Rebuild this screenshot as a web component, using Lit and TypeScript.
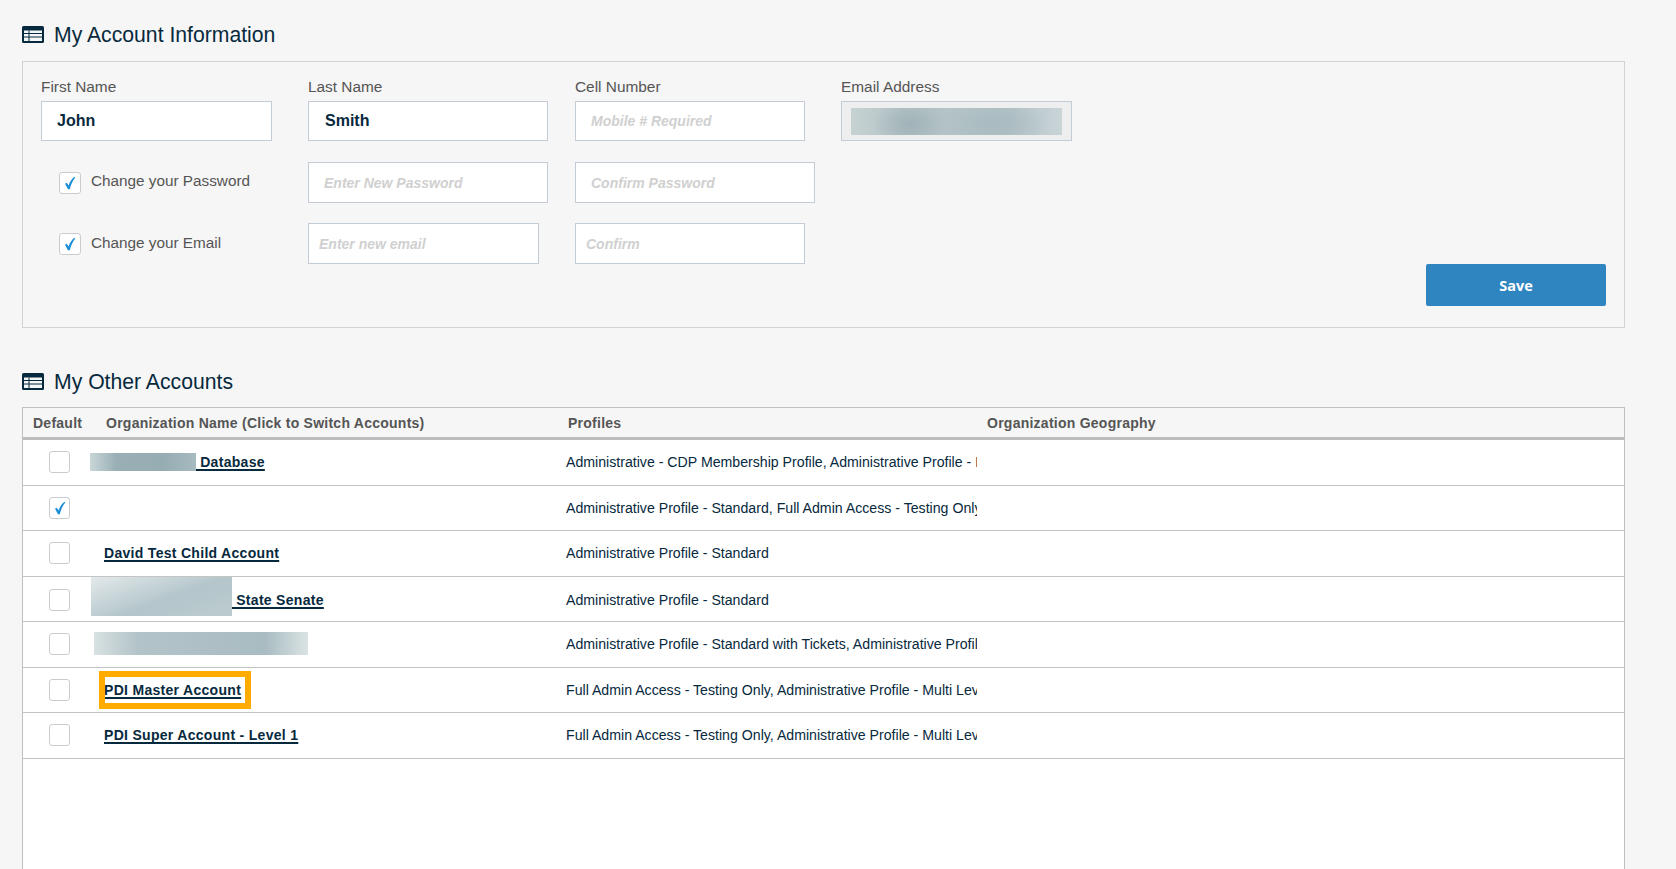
import { LitElement, html, css } from "lit";
import { customElement } from "lit/decorators.js";

const checkIcon = html`<svg width="12" height="14" viewBox="0 0 12 14"><path d="M1 7.8 L2.8 6.8 L4.6 9.4 C5.6 6.4 7.6 3 10.4 .8 L11.2 1.4 C8.8 4.4 6.9 8.4 5.8 13.2 L4 13.2 Z" fill="#1b8ed6"></path></svg>`;

const listIcon = html`<svg class="list-icon" width="22" height="17" viewBox="0 0 22 17">
  <rect width="22" height="17" rx="1.5" fill="#07293d"></rect>
  <rect x="2" y="4.5" width="18" height="10.5" fill="#f4f7f9"></rect>
  <path d="M2 7.5H20M2 11H20M7 4.5V15" stroke="#07293d" stroke-width="1" fill="none"></path>
</svg>`;

interface Account {
  name?: string;
  blur?: string;
  checked?: boolean;
  highlight?: boolean;
  profiles: string;
}

const ACCOUNTS: Account[] = [
  { blur: "blur-a", name: " Database", profiles: "Administrative - CDP Membership Profile, Administrative Profile - Multi Level" },
  { checked: true, profiles: "Administrative Profile - Standard, Full Admin Access - Testing Only, Administrative" },
  { name: "David Test Child Account", profiles: "Administrative Profile - Standard" },
  { blur: "blur-b", name: " State Senate", profiles: "Administrative Profile - Standard" },
  { blur: "blur-c", profiles: "Administrative Profile - Standard with Tickets, Administrative Profile - Multi Level" },
  { name: "PDI Master Account", highlight: true, profiles: "Full Admin Access - Testing Only, Administrative Profile - Multi Level" },
  { name: "PDI Super Account - Level 1", profiles: "Full Admin Access - Testing Only, Administrative Profile - Multi Level" },
];

@customElement("app-root")
export class AppRoot extends LitElement {
  static styles = css`
    :host {
      display: block;
      height: 869px;
      overflow: hidden;
      background: #f6f6f6;
      color: #07293d;
      font-family: "Liberation Sans", Arial, sans-serif;
      padding: 0 51px 0 22px;
      box-sizing: border-box;
    }

    .heading {
      display: flex;
      align-items: center;
      gap: 10px;
      height: 35px;
      margin: 0;
      font-size: 21.2px;
      font-weight: 400;
      color: #07293d;
    }

    .heading-first {
      padding-top: 17px;
      margin-bottom: 9px;
    }

    .heading-second {
      margin-top: 36px;
      margin-bottom: 8px;
    }

    .panel {
      border: 1px solid #d2d2d2;
      padding: 16px 18px 21px 18px;
      display: grid;
      grid-template-columns: 267px 267px 266px 1fr;
    }

    .field-label {
      display: block;
      font-size: 15.4px;
      line-height: 18px;
      height: 18px;
      margin-bottom: 5px;
      color: #555;
    }

    .field input,
    .email-box {
      display: block;
      box-sizing: border-box;
      height: 40px;
      width: 231px;
      border: 1px solid #c2cbd6;
      background: #fff;
      padding: 0 15px;
      font-family: inherit;
      font-size: 16px;
      font-weight: 700;
      color: #07293d;
      outline: none;
    }

    .field input::placeholder {
      color: #d0d0d0;
      font-style: italic;
      font-size: 14px;
      font-weight: 700;
      opacity: 1;
    }

    .field input.short {
      width: 230px;
    }

    .field input.last {
      width: 240px;
      padding-left: 16px;
    }

    .field input.wide {
      width: 240px;
      height: 41px;
    }

    .field input.tall {
      height: 41px;
    }

    .field input.tight {
      padding-left: 10px;
    }

    .email-box {
      background: #eeeeee;
      padding: 6px 9px;
    }

    .email-blur {
      height: 27px;
      background: radial-gradient(ellipse 18% 90% at 28% 60%, #a1b3b8 0%, #a1b3b800 100%),
        radial-gradient(ellipse 25% 90% at 68% 60%, #a9bbc0 0%, #a9bbc000 100%),
        linear-gradient(90deg, #c6d2d2, #b4c3c7 25%, #b3c3c8 75%, #c9d4d7);
    }

    .row-2 {
      margin-top: 21px;
      grid-column: 1 / -1;
      display: grid;
      grid-template-columns: subgrid;
    }

    .row-3 {
      margin-top: 20px;
      grid-column: 1 / -1;
      display: grid;
      grid-template-columns: subgrid;
    }

    .check-row {
      display: flex;
      align-items: center;
      gap: 10px;
      padding: 10px 0 0 18px;
      height: 22px;
      font-size: 15.3px;
      color: #555;
    }

    .check-row span.text {
      position: relative;
      top: -2px;
    }

    .row-3 .check-row span.text {
      top: -1px;
    }

    .box {
      display: flex;
      align-items: center;
      justify-content: center;
      box-sizing: border-box;
      width: 22px;
      height: 22px;
      flex: none;
      background: #fff;
      border: 1px solid #c9cdd1;
      border-radius: 3px;
    }

    .actions {
      grid-column: 1 / -1;
      display: flex;
      justify-content: flex-end;
    }

    .save {
      width: 180px;
      height: 42px;
      border: none;
      border-radius: 2px;
      background: #2f85bf;
      color: #fff;
      font-family: "Open Sans", sans-serif;
      font-size: 14.5px;
      font-weight: 700;
    }

    .table {
      border: 1px solid #c0c0c0;
      border-bottom: none;
      height: 470px;
      background: #fff;
    }

    .thead,
    .tr {
      display: grid;
      grid-template-columns: 73px 462px 419px 1fr;
    }

    .thead {
      box-sizing: border-box;
      height: 32px;
      padding-top: 1px;
      align-items: center;
      background: #f6f6f6;
      border-bottom: 3px solid #bdbdbd;
      font-size: 14px;
      font-weight: 700;
      letter-spacing: 0.25px;
      color: #555;
    }

    .thead div {
      padding-left: 10px;
    }

    .tr {
      box-sizing: border-box;
      height: 45.5px;
      align-items: center;
      border-bottom: 1px solid #c4c4c4;
      font-size: 14.15px;
    }

    .tr .box {
      width: 21px;
      margin-left: 26px;
    }

    .name {
      display: flex;
      align-items: center;
      padding-left: 8px;
      height: 100%;
      font-size: 14px;
    }

    .name a {
      position: relative;
      color: #07293d;
      font-weight: 700;
      letter-spacing: 0.3px;
      white-space: pre;
      text-decoration: underline;
      text-decoration-thickness: 2px;
      text-underline-offset: 2px;
      text-decoration-skip-ink: none;
    }

    .name a.highlight::after {
      content: "";
      position: absolute;
      left: -5.5px;
      right: -9.5px;
      top: -11px;
      bottom: -11px;
      border: 6px solid #ffab00;
    }

    .blur-a {
      width: 106px;
      height: 18px;
      margin-left: -14px;
      background: linear-gradient(90deg, #c9d6d8, #99afb5 25%, #97adb4 70%, #a6babf);
    }

    .blur-b {
      width: 141px;
      height: 39px;
      margin: 0 0 7px -13px;
      background: linear-gradient(160deg, #e3e9ea, #b4c6cb 55%, #bccbd0);
    }

    .blur-c {
      width: 214px;
      height: 23px;
      margin: 0 0 2px -10px;
      background: linear-gradient(90deg, #d8e1e2, #b3c4c9 20%, #a9bcc2 80%, #dae3e3);
    }

    .profiles {
      padding-left: 8px;
      overflow: hidden;
      white-space: nowrap;
      color: #07293d;
    }
  `;

  renderName(a: Account) {
    return html`<div class="name">
      ${a.blur ? html`<div class=${a.blur}></div>` : ""}
      ${a.name
        ? html`<a href="#" class=${a.highlight ? "highlight" : ""}>${a.name}</a>`
        : ""}
    </div>`;
  }

  render() {
    return html`
      <h2 class="heading heading-first">${listIcon}My Account Information</h2>
      <div class="panel">
        <label class="field">
          <span class="field-label">First Name</span>
          <input value="John" />
        </label>
        <label class="field">
          <span class="field-label">Last Name</span>
          <input class="last" value="Smith" />
        </label>
        <label class="field">
          <span class="field-label">Cell Number</span>
          <input class="short" placeholder="Mobile # Required" />
        </label>
        <div class="field">
          <span class="field-label">Email Address</span>
          <div class="email-box"><div class="email-blur"></div></div>
        </div>

        <div class="row-2">
          <div class="check-row">
            <span class="box">${checkIcon}</span><span class="text">Change your Password</span>
          </div>
          <div class="field"><input class="wide" placeholder="Enter New Password" /></div>
          <div class="field"><input class="wide" placeholder="Confirm Password" /></div>
        </div>

        <div class="row-3">
          <div class="check-row">
            <span class="box">${checkIcon}</span><span class="text">Change your Email</span>
          </div>
          <div class="field"><input class="tall tight" placeholder="Enter new email" /></div>
          <div class="field"><input class="tall tight short" placeholder="Confirm" /></div>
        </div>

        <div class="actions"><button class="save">Save</button></div>
      </div>

      <h2 class="heading heading-second">${listIcon}My Other Accounts</h2>
      <div class="table">
        <div class="thead">
          <div>Default</div>
          <div>Organization Name (Click to Switch Accounts)</div>
          <div>Profiles</div>
          <div>Organization Geography</div>
        </div>
        ${ACCOUNTS.map(
          (a) => html`<div class="tr">
            <div><span class="box">${a.checked ? checkIcon : ""}</span></div>
            ${this.renderName(a)}
            <div class="profiles">${a.profiles}</div>
            <div></div>
          </div>`
        )}
      </div>
    `;
  }
}
